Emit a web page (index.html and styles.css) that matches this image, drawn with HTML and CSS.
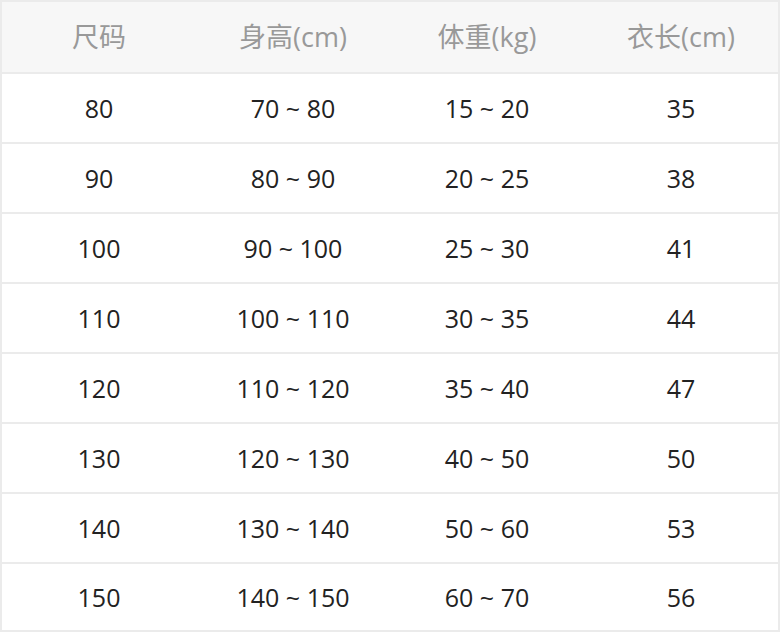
FILE: index.html
```html
<!DOCTYPE html>
<html lang="zh">
<head>
<meta charset="utf-8">
<title>尺码表</title>
<link rel="stylesheet" href="styles.css">
</head>
<body>
<div class="size-table">
  <div class="row head"><div>尺码</div><div>身高(cm)</div><div>体重(kg)</div><div>衣长(cm)</div></div>
  <div class="row"><div>80</div><div>70 ~ 80</div><div>15 ~ 20</div><div>35</div></div>
  <div class="row"><div>90</div><div>80 ~ 90</div><div>20 ~ 25</div><div>38</div></div>
  <div class="row"><div>100</div><div>90 ~ 100</div><div>25 ~ 30</div><div>41</div></div>
  <div class="row"><div>110</div><div>100 ~ 110</div><div>30 ~ 35</div><div>44</div></div>
  <div class="row"><div>120</div><div>110 ~ 120</div><div>35 ~ 40</div><div>47</div></div>
  <div class="row"><div>130</div><div>120 ~ 130</div><div>40 ~ 50</div><div>50</div></div>
  <div class="row"><div>140</div><div>130 ~ 140</div><div>50 ~ 60</div><div>53</div></div>
  <div class="row last"><div>150</div><div>140 ~ 150</div><div>60 ~ 70</div><div>56</div></div>
</div>
</body>
</html>
```
FILE: styles.css
```css
html, body {
  margin: 0;
  padding: 0;
  background: #ffffff;
}
.size-table {
  width: 780px;
  box-sizing: border-box;
  border: 2px solid #ebebeb;
  border-bottom: none;
  font-family: "Open Sans", "Noto Sans CJK SC", sans-serif;
  font-size: 25px;
  color: #222222;
}
.row {
  display: grid;
  grid-template-columns: repeat(4, 1fr);
  height: 70px;
  box-sizing: border-box;
  border-bottom: 2px solid #ebebeb;
  align-items: center;
  text-align: center;
}
.row.head {
  height: 72px;
  padding-bottom: 4px;
  background: #f7f7f7;
  color: #999999;
  font-size: 27px;
}
.row.last {
  height: 68px;
}
```
